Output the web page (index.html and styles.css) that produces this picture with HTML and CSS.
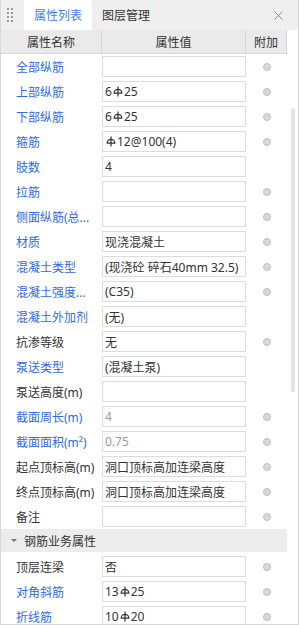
FILE: index.html
```html
<!DOCTYPE html>
<html lang="zh-CN">
<head>
  <meta charset="UTF-8">
  <meta name="viewport" content="width=device-width, initial-scale=1.0">
  <title>属性列表</title>
  <link rel="stylesheet" href="styles.css">
</head>
<body>
  <svg width="0" height="0" style="position: absolute;">
    <symbol id="rebar" viewBox="0 0 9 10">
      <path d="M1 6.5 A3.5 3.5 0 0 1 8 6.5 M0.5 6.5 H8.5 M4.5 0.5 V9.5" fill="none" stroke="#333" stroke-width="1.1"/>
    </symbol>
  </svg>

  <div class="panel">
    <div class="tabs">
      <div class="grip">
        <span></span><span></span><span></span><span></span>
        <span></span><span></span><span></span><span></span>
      </div>
      <div class="tab active">属性列表</div>
      <div class="tab">图层管理</div>
      <div class="close">
        <svg width="9" height="9" viewBox="0 0 9 9"><path d="M0.5 0.5 L8.5 8.5 M8.5 0.5 L0.5 8.5" stroke="#8a8a8a" stroke-width="1"/></svg>
      </div>
    </div>

    <div class="body">
      <div class="table">
        <div class="head">
          <div>属性名称</div>
          <div>属性值</div>
          <div>附加</div>
        </div>

        <div class="row"><div class="name link">全部纵筋</div><div class="val"></div><div class="extra"><i class="dot"></i></div></div>
        <div class="row"><div class="name link">上部纵筋</div><div class="val">6<svg class="rb"><use href="#rebar"/></svg>25</div><div class="extra"><i class="dot"></i></div></div>
        <div class="row"><div class="name link">下部纵筋</div><div class="val">6<svg class="rb"><use href="#rebar"/></svg>25</div><div class="extra"><i class="dot"></i></div></div>
        <div class="row"><div class="name link">箍筋</div><div class="val"><svg class="rb"><use href="#rebar"/></svg>12@100(4)</div><div class="extra"><i class="dot"></i></div></div>
        <div class="row"><div class="name link">肢数</div><div class="val">4</div><div class="extra"></div></div>
        <div class="row"><div class="name link">拉筋</div><div class="val"></div><div class="extra"><i class="dot"></i></div></div>
        <div class="row"><div class="name link">侧面纵筋(总...</div><div class="val"></div><div class="extra"><i class="dot"></i></div></div>
        <div class="row"><div class="name link">材质</div><div class="val">现浇混凝土</div><div class="extra"><i class="dot"></i></div></div>
        <div class="row"><div class="name link">混凝土类型</div><div class="val">(现浇砼 碎石40mm 32.5)</div><div class="extra"><i class="dot"></i></div></div>
        <div class="row"><div class="name link">混凝土强度...</div><div class="val">(C35)</div><div class="extra"><i class="dot"></i></div></div>
        <div class="row"><div class="name link">混凝土外加剂</div><div class="val">(无)</div><div class="extra"></div></div>
        <div class="row"><div class="name">抗渗等级</div><div class="val">无</div><div class="extra"><i class="dot"></i></div></div>
        <div class="row"><div class="name link">泵送类型</div><div class="val">(混凝土泵)</div><div class="extra"></div></div>
        <div class="row"><div class="name">泵送高度(m)</div><div class="val"></div><div class="extra"></div></div>
        <div class="row"><div class="name link">截面周长(m)</div><div class="val off">4</div><div class="extra"><i class="dot"></i></div></div>
        <div class="row"><div class="name link">截面面积(m²)</div><div class="val off">0.75</div><div class="extra"><i class="dot"></i></div></div>
        <div class="row"><div class="name">起点顶标高(m)</div><div class="val">洞口顶标高加连梁高度</div><div class="extra"><i class="dot"></i></div></div>
        <div class="row"><div class="name">终点顶标高(m)</div><div class="val">洞口顶标高加连梁高度</div><div class="extra"><i class="dot"></i></div></div>
        <div class="row"><div class="name">备注</div><div class="val"></div><div class="extra"><i class="dot"></i></div></div>

        <div class="group"><i class="caret"></i>钢筋业务属性</div>

        <div class="row"><div class="name">顶层连梁</div><div class="val">否</div><div class="extra"><i class="dot"></i></div></div>
        <div class="row"><div class="name link">对角斜筋</div><div class="val">13<svg class="rb"><use href="#rebar"/></svg>25</div><div class="extra"><i class="dot"></i></div></div>
        <div class="row"><div class="name link">折线筋</div><div class="val">10<svg class="rb"><use href="#rebar"/></svg>20</div><div class="extra"><i class="dot"></i></div></div>
      </div>

      <div class="scrollbar">
        <div class="thumb"></div>
      </div>
    </div>
  </div>
</body>
</html>
```

FILE: styles.css
```css
body {
  margin: 0;
  padding: 0;
  background-color: #ffffff;
  font-family: "Noto Sans", "Noto Sans CJK SC", sans-serif;
  font-size: 12px;
  color: #333333;
}

.panel {
  width: 299px;
  height: 625px;
  box-sizing: border-box;
  border: 1px solid #d9d9d9;
  border-top: none;
  overflow: hidden;
  background-color: #ffffff;
}

/* Tabs */
.tabs {
  display: flex;
  height: 30px;
  background-color: #efefef;
}

.grip {
  width: 23px;
  display: grid;
  grid-template-columns: 2px 2px;
  grid-auto-rows: 2px;
  column-gap: 2px;
  row-gap: 2px;
  align-content: center;
  padding-left: 6px;
  box-sizing: border-box;
}

.grip span {
  background-color: #9a9a9a;
}

.tab {
  width: 68px;
  display: flex;
  align-items: center;
  justify-content: center;
  font-size: 12px;
  color: #333333;
}

.tab.active {
  background-color: #ffffff;
  color: #3c80f0;
}

.close {
  margin-left: auto;
  width: 26px;
  display: flex;
  align-items: center;
  padding-left: 2px;
  box-sizing: border-box;
}

/* Table */
.body {
  display: flex;
}

.table {
  width: 286px;
}

.head {
  display: grid;
  grid-template-columns: 101px 144px 41px;
  height: 24px;
  background-color: #eaeaea;
  border-bottom: 1px solid #d6d6d6;
  box-sizing: border-box;
}

.head div {
  display: flex;
  align-items: center;
  justify-content: center;
  border-right: 1px solid #d6d6d6;
}

.row {
  display: grid;
  grid-template-columns: 101px 144px 41px;
  height: 25px;
  align-items: center;
}

.name {
  padding-left: 15px;
  white-space: nowrap;
  overflow: hidden;
}

.name.link {
  color: #2f6ae8;
}

.val {
  height: 21px;
  box-sizing: border-box;
  border: 1px solid #dcdcdc;
  padding-left: 2px;
  display: flex;
  align-items: center;
  white-space: nowrap;
  overflow: hidden;
  color: #333333;
}

.val.off {
  color: #9a9a9a;
}

.rb {
  width: 10px;
  height: 11px;
  margin: 0 1px;
}

.extra {
  display: flex;
  justify-content: center;
}

.dot {
  width: 8px;
  height: 8px;
  box-sizing: border-box;
  border-radius: 50%;
  background-color: #d9d9d9;
  border: 1px solid #bdbdbd;
}

.group {
  display: flex;
  align-items: center;
  height: 23px;
  margin-bottom: 2px;
  background-color: #ececec;
  padding-left: 10px;
}

.caret {
  width: 0;
  height: 0;
  border-left: 3px solid transparent;
  border-right: 3px solid transparent;
  border-top: 3px solid #777777;
  margin-right: 7px;
}

/* Scrollbar */
.scrollbar {
  width: 11px;
}

.thumb {
  width: 4px;
  height: 284px;
  margin-top: 78px;
  margin-left: 4px;
  border-radius: 2px;
  background-color: #e3e3e3;
}
```
